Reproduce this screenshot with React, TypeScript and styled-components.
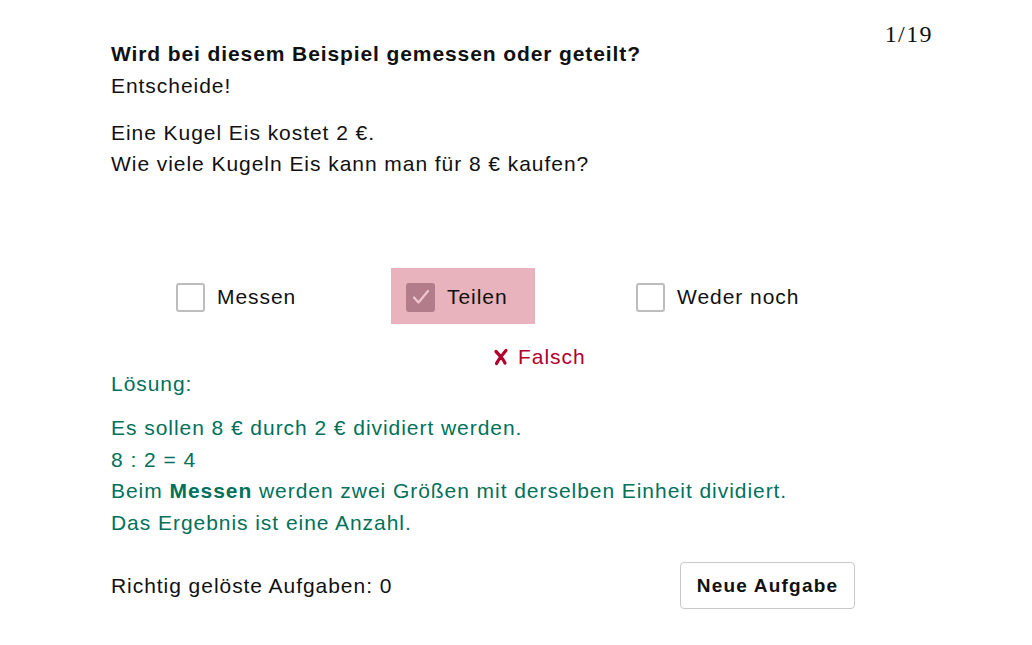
import React from 'react';
import styled, { createGlobalStyle } from 'styled-components';

const color = {
  text: '#111111',
  green: '#00715a',
  red: '#b0002b',
  wrongBg: '#e8b3bc',
  wrongBox: '#b37c8a',
  border: '#bdbdbd',
};

const GlobalStyle = createGlobalStyle`
  html, body {
    margin: 0;
    padding: 0;
    background: #ffffff;
  }
  body {
    font-family: 'Liberation Sans', Arial, sans-serif;
    color: ${color.text};
  }
`;

const StyledPage = styled.div`
  width: 1032px;
  height: 645px;
  box-sizing: border-box;
  padding: 22px 99px 0 111px;
  font-size: 21px;
  line-height: 31px;
  letter-spacing: 0.95px;
`;

const StyledHeader = styled.header`
  display: flex;
  justify-content: space-between;
  align-items: flex-start;
`;

const StyledIntro = styled.div`
  padding-top: 15px;
`;

const StyledTitle = styled.h1`
  margin: 0;
  font-size: 21px;
  font-weight: 700;
  line-height: 33px;
  letter-spacing: 0.9px;
`;

const StyledCounter = styled.div`
  font-family: 'Liberation Serif', 'Times New Roman', serif;
  font-size: 24px;
  line-height: 24px;
  letter-spacing: 1.4px;
`;

const StyledParagraph = styled.p<{ gap?: number }>`
  margin: ${props => props.gap ?? 0}px 0 0;
`;

const StyledOptions = styled.div`
  display: grid;
  grid-template-columns: 230px 230px 230px;
  margin: 89px 0 0 50px;
`;

const StyledOption = styled.label<{ wrong?: boolean }>`
  justify-self: start;
  display: flex;
  align-items: center;
  gap: 12px;
  height: 56px;
  padding: 0 27px 0 15px;
  background: ${props => (props.wrong ? color.wrongBg : 'transparent')};
  cursor: pointer;
`;

const StyledBox = styled.span<{ checked?: boolean }>`
  width: 29px;
  height: 29px;
  box-sizing: border-box;
  border-radius: 3px;
  border: ${props => (props.checked ? 'none' : `2px solid ${color.border}`)};
  background: ${props => (props.checked ? color.wrongBox : '#fff')};
  display: flex;
  align-items: center;
  justify-content: center;
  margin-top: 2px;
`;

const StyledFeedback = styled.div`
  margin: 19px 0 0 382px;
  line-height: 28px;
  color: ${color.red};
  display: flex;
  align-items: center;
  gap: 9px;
`;

const StyledSolution = styled.div`
  color: ${color.green};
`;

const StyledSolutionHead = styled.div`
  line-height: 25px;
`;

const StyledSolutionBody = styled.div`
  margin-top: 16px;
  line-height: 31.6px;
`;

const StyledFooter = styled.footer`
  width: 744px;
  margin-top: 24px;
  display: flex;
  justify-content: space-between;
  align-items: center;
`;

const StyledButton = styled.button`
  width: 175px;
  height: 47px;
  font-family: inherit;
  font-size: 19px;
  font-weight: 700;
  letter-spacing: 1.2px;
  color: ${color.text};
  background: #ffffff;
  border: 1px solid #c8c8c8;
  border-radius: 4px;
  cursor: pointer;
`;

const CheckMark = () => (
  <svg width="22" height="22" viewBox="0 0 22 22" fill="none">
    <path d="M4 11.5l4.5 5L18 5" stroke="#efc6cd" strokeWidth="2.2" strokeLinecap="round" strokeLinejoin="round" />
  </svg>
);

const Cross = () => (
  <svg width="16" height="18" viewBox="0 0 16 18">
    <path d="M3 3.5c1.5 1.5 3 3.5 5 5.5M13 2.5C10 6 6 10.5 3.5 15.5M8 9c1.8 2 3 4 4 6" stroke={color.red} strokeWidth="3.2" strokeLinecap="round" fill="none" />
  </svg>
);

const options = [
  { label: 'Messen', checked: false },
  { label: 'Teilen', checked: true },
  { label: 'Weder noch', checked: false },
];

export default function App() {
  return (
    <>
      <GlobalStyle />
      <StyledPage>
        <StyledHeader>
          <StyledIntro>
            <StyledTitle>Wird bei diesem Beispiel gemessen oder geteilt?</StyledTitle>
            <StyledParagraph>Entscheide!</StyledParagraph>
            <StyledParagraph gap={16}>
              Eine Kugel Eis kostet 2 €.
              <br />
              Wie viele Kugeln Eis kann man für 8 € kaufen?
            </StyledParagraph>
          </StyledIntro>
          <StyledCounter>1/19</StyledCounter>
        </StyledHeader>

        <StyledOptions>
          {options.map(option => (
            <StyledOption key={option.label} wrong={option.checked}>
              <StyledBox checked={option.checked}>{option.checked && <CheckMark />}</StyledBox>
              {option.label}
            </StyledOption>
          ))}
        </StyledOptions>

        <StyledFeedback>
          <Cross />
          Falsch
        </StyledFeedback>

        <StyledSolution>
          <StyledSolutionHead>Lösung:</StyledSolutionHead>
          <StyledSolutionBody>
            Es sollen 8 € durch 2 € dividiert werden.
            <br />8 : 2 = 4
            <br />
            Beim <b>Messen</b> werden zwei Größen mit derselben Einheit dividiert.
            <br />
            Das Ergebnis ist eine Anzahl.
          </StyledSolutionBody>
        </StyledSolution>

        <StyledFooter>
          <span>Richtig gelöste Aufgaben: 0</span>
          <StyledButton>Neue Aufgabe</StyledButton>
        </StyledFooter>
      </StyledPage>
    </>
  );
}
